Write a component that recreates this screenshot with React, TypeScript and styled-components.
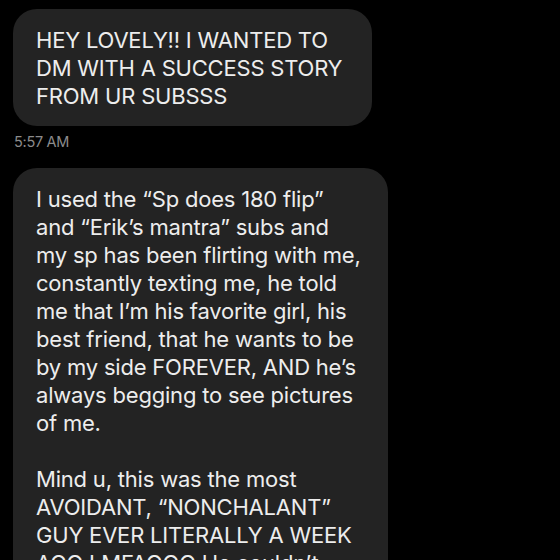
import styled, { createGlobalStyle } from "styled-components";

const GlobalStyle = createGlobalStyle`
  html, body {
    margin: 0;
    padding: 0;
    background: #000000;
  }
  body {
    font-family: Inter, "Liberation Sans", Arial, sans-serif;
    -webkit-font-smoothing: antialiased;
  }
`;

type MessageProps = {
  lines: string[];
  width: number;
};

const Message = ({ lines, width }: MessageProps) => (
  <Bubble $width={width}>
    {lines.map((line, i) =>
      line === "" ? <BlankLine key={i} /> : <Line key={i}>{line}</Line>
    )}
  </Bubble>
);

const firstLines = [
  "HEY LOVELY!! I WANTED TO",
  "DM WITH A SUCCESS STORY",
  "FROM UR SUBSSS",
];

const secondLines = [
  "I used the \u201cSp does 180 flip\u201d",
  "and \u201cErik\u2019s mantra\u201d subs and",
  "my sp has been flirting with me,",
  "constantly texting me, he told",
  "me that I\u2019m his favorite girl, his",
  "best friend, that he wants to be",
  "by my side FOREVER, AND he\u2019s",
  "always begging to see pictures",
  "of me.",
  "",
  "Mind u, this was the most",
  "AVOIDANT, \u201cNONCHALANT\u201d",
  "GUY EVER LITERALLY A WEEK",
  "AGO LMFAOOO He couldn\u2019t",
  "even text me back",
];

export default function App() {
  return (
    <>
      <GlobalStyle />
      <Thread>
        <Group>
          <Message lines={firstLines} width={359} />
          <Timestamp>5:57 AM</Timestamp>
        </Group>
        <Message lines={secondLines} width={375} />
      </Thread>
    </>
  );
}

const Thread = styled.div`
  width: 560px;
  height: 560px;
  overflow: hidden;
  background: #000000;
  box-sizing: border-box;
  padding: 9px 0 0 13px;
  display: flex;
  flex-direction: column;
  gap: 17px;
`;

const Group = styled.div`
  display: flex;
  flex-direction: column;
  gap: 7px;
`;

const Bubble = styled.div<{ $width: number }>`
  width: ${(p) => p.$width}px;
  box-sizing: border-box;
  background: #232323;
  border-radius: 24px;
  padding: 17px 0 16px 23px;
  display: flex;
  flex-direction: column;
`;

const Line = styled.div`
  color: #ededed;
  font-size: 22px;
  line-height: 28px;
  letter-spacing: -0.2px;
  white-space: nowrap;
`;

const BlankLine = styled.div`
  height: 28px;
`;

const Timestamp = styled.div`
  color: #8b8b8b;
  font-size: 14.5px;
  line-height: 18px;
  letter-spacing: -0.3px;
  padding-left: 1px;
`;
